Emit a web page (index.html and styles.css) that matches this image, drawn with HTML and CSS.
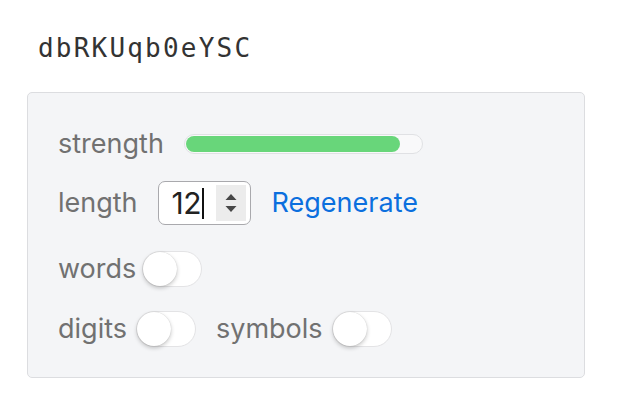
FILE: index.html
```html
<!DOCTYPE html>
<html>
<head>
<meta charset="utf-8">
<link rel="stylesheet" href="styles.css">
</head>
<body>
  <h1 class="password">dbRKUqb0eYSC</h1>
  <div class="panel">
    <div class="row row-strength">
      <span class="label">strength</span>
      <div class="meter"><div class="meter-fill" style="width: 91%"></div></div>
    </div>
    <div class="row row-length">
      <span class="label">length</span>
      <div class="number">
        <span class="number-value">12</span><span class="caret"></span>
        <span class="spinner">
          <svg width="16" height="26" viewBox="0 0 16 26"><path d="M2.5 10 L8 4 L13.5 10 Z" fill="#474747"/><path d="M2.5 16 L8 22 L13.5 16 Z" fill="#474747"/></svg>
        </span>
      </div>
      <a class="link">Regenerate</a>
    </div>
    <div class="row row-words">
      <span class="label">words</span>
      <span class="toggle"><span class="knob"></span></span>
    </div>
    <div class="row row-flags">
      <span class="label">digits</span>
      <span class="toggle"><span class="knob"></span></span>
      <span class="label label-symbols">symbols</span>
      <span class="toggle"><span class="knob"></span></span>
    </div>
  </div>
</body>
</html>
```

FILE: styles.css
```css
html, body {
  margin: 0;
  padding: 0;
  background: #ffffff;
}

.password {
  margin: 33px 0 0 38px;
  font-family: "DejaVu Sans Mono", monospace;
  font-weight: normal;
  font-size: 26px;
  line-height: 30px;
  letter-spacing: 2.2px;
  color: #333333;
}

.panel {
  margin: 29px 0 0 27px;
  width: 556px;
  height: 284px;
  box-sizing: content-box;
  border: 1px solid #dcdde0;
  border-radius: 5px;
  background: #f4f5f7;
  display: flex;
  flex-direction: column;
}

.row {
  display: flex;
  align-items: center;
  padding-left: 30px;
  height: 36px;
}

.row-strength { margin-top: 33px; }
.row-length { margin-top: 19px; height: 44px; }
.row-words { margin-top: 26px; }
.row-flags { margin-top: 24px; }

.label {
  font-family: "Inter", "Liberation Sans", sans-serif;
  font-size: 27px;
  line-height: 36px;
  color: #717171;
}

.meter {
  margin-left: 20px;
  width: 235px;
  height: 16px;
  border: 1px solid #e0e1e4;
  border-radius: 10px;
  background: #f9f9fa;
  padding: 1px;
  box-sizing: content-box;
}

.meter-fill {
  height: 100%;
  border-radius: 9px;
  background: #68d67a;
}

.row-length .label { margin-right: 20px; }

.number {
  display: flex;
  align-items: center;
  width: 91px;
  height: 42px;
  border: 1px solid #a9a9ad;
  border-radius: 7px;
  background: #ffffff;
}

.number-value {
  margin-left: 13px;
  font-family: "Inter", "Liberation Sans", sans-serif;
  font-size: 30px;
  color: #222222;
  line-height: 36px;
  letter-spacing: -0.5px;
}

.caret {
  width: 2px;
  height: 31px;
  background: #111;
  margin-left: 1px;
}

.spinner {
  margin-left: auto;
  margin-right: 4px;
  width: 30px;
  height: 36px;
  background: #ececec;
  display: flex;
  align-items: center;
  justify-content: center;
}

.link {
  margin-left: 21px;
  font-family: "Inter", "Liberation Sans", sans-serif;
  font-size: 27px;
  line-height: 36px;
  color: #0b6fde;
}

.toggle {
  position: relative;
  display: inline-block;
  width: 58px;
  height: 34px;
  border: 1px solid #e3e3e5;
  border-radius: 18px;
  background: #ffffff;
  margin-left: 6px;
}

.row-flags .toggle { margin-left: 9px; }
.row-flags .label-symbols { margin-left: 20px; }

.knob {
  position: absolute;
  left: 0;
  top: 0;
  width: 34px;
  height: 34px;
  border-radius: 50%;
  background: #ffffff;
  box-shadow: 0 2px 4px rgba(0, 0, 0, 0.22), 0 0 1px rgba(0, 0, 0, 0.2);
}
```
